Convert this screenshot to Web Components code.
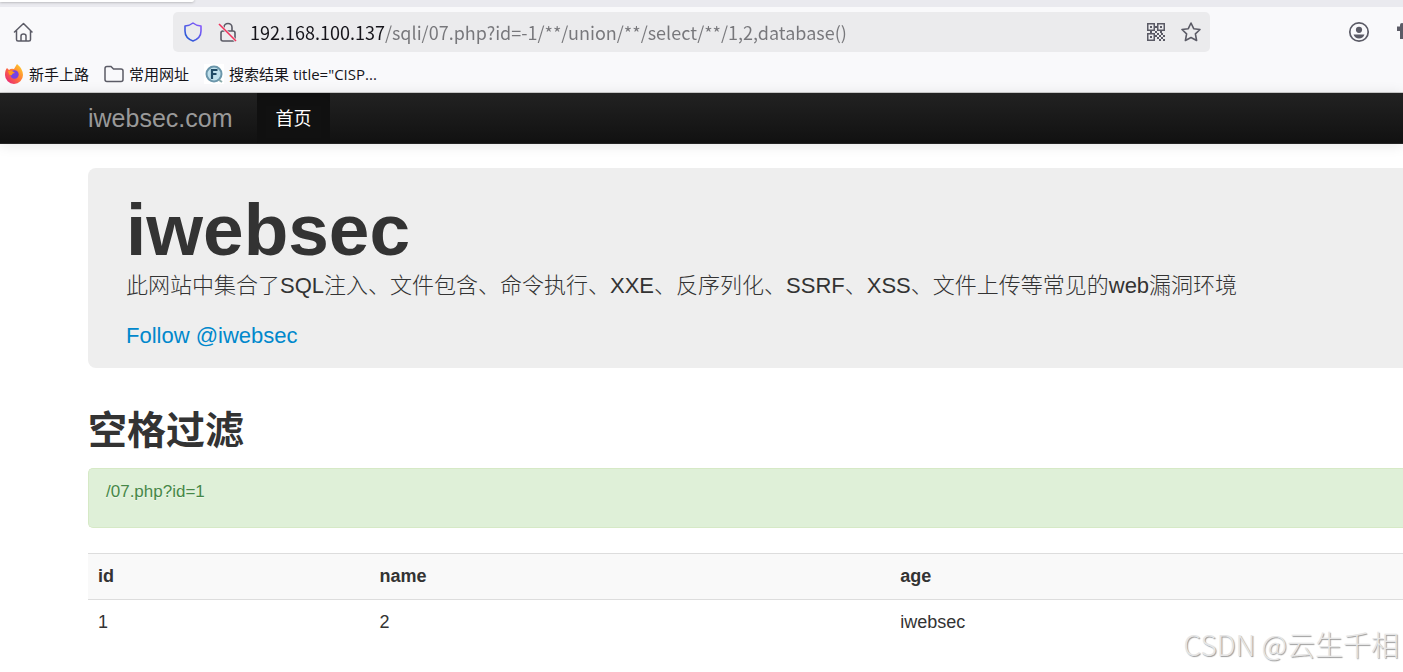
<!DOCTYPE html>
<html lang="zh-CN">
<head>
<meta charset="utf-8">
<title>iwebsec</title>
<style>
html,body{margin:0;min-height:100%}
body{font-family:"Liberation Sans","Noto Sans CJK SC",sans-serif;font-size:18px;line-height:25px;color:#333;background:#fff}
</style>
</head>
<body>
<iw-page></iw-page>
<script>
const define = (name, css, html) => customElements.define(name, class extends HTMLElement {
  constructor(){
    super();
    const t = document.createElement('template');
    t.innerHTML = `<style>*{box-sizing:border-box}${css}</style>${html}`;
    this.attachShadow({mode:'open'}).append(t.content.cloneNode(true));
  }
});

define('bm-link', `
:host{display:block}
a{display:flex;align-items:center;gap:5px;color:#15141a;text-decoration:none;font:15px/22px "Open Sans","Noto Sans CJK SC",sans-serif;white-space:nowrap}
::slotted(svg){display:block;flex:none}`,
`<a href="#"><slot name="icon"></slot><span><slot></slot></span></a>`);

define('tool-button', `
:host{display:block;flex:none}
button{display:block;border:0;padding:0;background:none;color:#5b5b66}
::slotted(svg){display:block}`,
`<button type="button"><slot></slot></button>`);

define('url-bar', `
:host{display:flex;align-items:center;height:40px;background:#ebebed;border-radius:5px;padding:0 8px 0 10px;min-width:0}
.icons{display:flex;gap:15px;margin-right:12px}
.end{display:flex;gap:14px}
input{flex:1;min-width:0;border:0;padding:0;outline:0;height:30px;font:18px/30px "Noto Sans CJK SC",sans-serif;color:transparent;
background:linear-gradient(90deg,#15141a 135px,#77777b 135px);-webkit-background-clip:text;background-clip:text}`,
`<div class="icons">
<tool-button><svg width="20" height="20" viewBox="0 0 20 20"><defs><linearGradient id="g" x1="0" y1="1" x2="1" y2="0"><stop offset="0" stop-color="#1b5bd0"/><stop offset="1" stop-color="#9059ff"/></linearGradient></defs><path d="M10 1Q13 3.500 18 4V9C18 13.500 15.500 17 10 19 4.500 17 2 13.500 2 9V4Q7 3.500 10 1Z" fill="none" stroke="url(#g)" stroke-width="1.600" stroke-linejoin="round"/></svg></tool-button>
<tool-button><svg width="20" height="20" viewBox="0 0 20 20" fill="none" stroke="#5b5b66" stroke-width="1.600"><rect x="3" y="9" width="14" height="10" rx="2"/><path d="M6 9V5.500a4 4 0 0 1 8 0V9"/><path d="M2 3 19 20" stroke="#ebebed" stroke-width="3"/><path d="M1 2 18 19" stroke="#f0325c"/></svg></tool-button>
</div>
<input type="text" aria-label="URL" value="192.168.100.137/sqli/07.php?id=-1/**/union/**/select/**/1,2,database()">
<div class="end">
<tool-button><svg width="20" height="20" viewBox="0 0 20 20" fill="#5b5b66"><path fill-rule="evenodd" d="M1 1h8v8H1zM2.500 2.500v5h5v-5zM11 1h8v8h-8zM12.500 2.500v5h5v-5zM1 11h8v8H1zM2.500 12.500v5h5v-5z"/><path d="M4 4h2v2H4zM14 4h2v2h-2zM4 14h2v2H4zM9 4h2v2H9zM4 9h2v2H4zM9 9h2v2H9zM14 9h2v2h-2zM11 11h2v2h-2zM15 11h2v2h-2zM13 13h2v2h-2zM17 13h2v2h-2zM11 15h2v2h-2zM15 15h2v2h-2zM9 13h2v2H9zM13 17h2v2h-2zM17 17h2v2h-2z"/></svg></tool-button>
<tool-button><svg width="22" height="20" viewBox="0 0 22 20"><path d="m11 1 2.700 5.700 6.300.800-4.600 4.300 1.200 6.700L11 15.500l-5.600 3 1.200-6.700L2 7.500l6.300-.800Z" fill="none" stroke="#5b5b66" stroke-width="1.600" stroke-linejoin="round"/></svg></tool-button>
</div>`);

define('browser-chrome', `
:host{display:block;background:#f9f9fb;border-bottom:1px solid #ccc}
.tabs{height:7px;background:#eaeaef;overflow:hidden}
.tab{width:194px;height:2px;background:#fff;border-radius:0 0 4px 0;box-shadow:0 0 3px #888}
.bar{display:flex;align-items:center;height:50px;padding-left:13px;overflow:hidden}
url-bar{flex:1;margin-left:140px}
.right{display:flex;flex:none;width:193px;padding-left:138px;gap:27px;overflow:hidden}
.marks{display:flex;align-items:center;height:35px;padding:0 4px 2px;gap:15px}`,
`<div class="tabs"><div class="tab"></div></div>
<div class="bar">
<tool-button><svg width="20" height="20" viewBox="0 0 20 20" fill="none" stroke="#5b5b66" stroke-width="1.500" stroke-linejoin="round" stroke-linecap="round"><path d="M1.500 10 10.500 1.500 19 10M3.500 8.500v9q0 1.500 1.500 1.500h11q1.500 0 1.500-1.500V8.500M8 19v-5q0-2 2.500-2t2.500 2v5"/></svg></tool-button>
<url-bar></url-bar>
<div class="right">
<tool-button><svg width="22" height="22" viewBox="0 0 22 22"><circle cx="11" cy="11" r="9.200" fill="none" stroke="#5b5b66" stroke-width="1.700"/><circle cx="11" cy="8.800" r="3.100" fill="#5b5b66"/><path d="M5.500 13.500h11q-1.500 4-5.500 4t-5.500-4Z" fill="#5b5b66"/></svg></tool-button>
<tool-button><svg width="20" height="22" viewBox="0 0 20 22"><path d="M0 5.500h3V4q0-2 2-2t2 2v14H3V10H0Z" fill="#5b5b66"/></svg></tool-button>
</div></div>
<nav class="marks">
<bm-link><svg slot="icon" width="20" height="20" viewBox="0 0 20 20"><defs><linearGradient id="f" x1="1" y1="0" x2="0" y2="1"><stop offset="0" stop-color="#ffe226"/><stop offset=".5" stop-color="#ff7139"/><stop offset="1" stop-color="#e31587"/></linearGradient></defs><path d="M3 4 5 6Q7 4 10 5L13 0Q19 5 19 11A9 9 0 0 1 1 11Q1 6 3 4Z" fill="url(#f)"/><circle cx="10.500" cy="10.500" r="4.200" fill="#7542e5"/><path d="M4 7Q8 6 11 9 8 9 8 11 6 12 5 10Z" fill="#ff9a1f"/></svg>新手上路</bm-link>
<bm-link><svg slot="icon" width="20" height="20" viewBox="0 0 20 20"><path d="M1 4.500q0-2 2-2h4l2.500 2.500H17q2 0 2 2v8.500q0 2-2 2H3q-2 0-2-2Z" fill="none" stroke="#5b5b66" stroke-width="1.500"/></svg>常用网址</bm-link>
<bm-link><svg slot="icon" width="20" height="20" viewBox="0 0 20 20"><rect width="20" height="20" fill="#fff"/><circle cx="10" cy="10" r="7.500" fill="#bfe0ec" stroke="#6b96ab" stroke-width="2"/><path d="M8 15V6h5.500M8 10h4.500" fill="none" stroke="#204b66" stroke-width="2.200"/><path d="m15 16 3 2" stroke="#8aa" stroke-width="2"/></svg>搜索结果 title="CISP...</bm-link>
</nav>`);

define('site-nav', `
:host{display:flex;height:51px;padding-left:88px;background:linear-gradient(#222,#111);border-bottom:1px solid #252525;box-shadow:0 1px 13px rgba(0,0,0,.1)}
a{display:flex;align-items:center;text-decoration:none}
.brand{font-size:25px;color:#999;margin-right:24px}
.home{padding:0 18px 2px 19px;background:#111;color:#fff;font:18px/25px "Noto Sans CJK SC",sans-serif;box-shadow:inset 0 4px 10px rgba(0,0,0,.125)}`,
`<a class="brand" href="#">iwebsec.com</a><a class="home" href="#">首页</a>`);

define('hero-unit', `
:host{display:block;background:#eee;border-radius:8px 0 0 8px;padding:24px 0 13px 38px}
h1{margin:0;font-size:73px;line-height:75px;font-weight:700}
p{margin:0 0 12px;font-size:22px;line-height:38px;font-weight:300;white-space:nowrap}
p:last-child{margin:0}
a{color:#08c;text-decoration:none}`,
`<h1>iwebsec</h1><p>此网站中集合了SQL注入、文件包含、命令执行、XXE、反序列化、SSRF、XSS、文件上传等常见的web漏洞环境</p><p><a href="#">Follow @iwebsec</a></p>`);

define('alert-box', `
:host{display:block;padding:10px 17px 23px;background:#dff0d8;border:1px solid #d6e9c6;border-right:0;border-radius:5px 0 0 5px;color:#468847;font-size:17px;line-height:25px;text-shadow:0 1px 0 rgba(255,255,255,.5)}`,
`<slot></slot>`);

define('data-table', `
:host{display:block}
table{width:100%;table-layout:fixed;border-collapse:collapse;font-size:18px;line-height:25px}
th,td{padding:10px;text-align:left;border-top:1px solid #ddd}
th{background:#f9f9f9}
th:nth-child(1){width:21.4%}th:nth-child(2){width:39.6%}`,
`<table><thead><tr><th>id</th><th>name</th><th>age</th></tr></thead><tbody><tr><td>1</td><td>2</td><td>iwebsec</td></tr></tbody></table>`);

define('water-mark', `
:host{position:absolute;right:4px;bottom:8px;font:28px/40px "Noto Sans CJK SC",sans-serif;font-weight:300;color:#e6e6e6;text-shadow:1px 1px 1px #999;white-space:nowrap;pointer-events:none}`,
`<slot></slot>`);

define('iw-page', `
:host{display:block;position:relative;min-height:100vh;overflow:hidden}
main{padding:24px 0 0 88px}
h2{margin:38px 0 12px;font-size:39px;line-height:50px;font-weight:700}
data-table{margin-top:25px}`,
`<browser-chrome></browser-chrome><site-nav></site-nav>
<main><hero-unit></hero-unit><h2>空格过滤</h2><alert-box>/07.php?id=1</alert-box><data-table></data-table></main>
<water-mark>CSDN @云生千相</water-mark>`);
</script>
</body>
</html>
